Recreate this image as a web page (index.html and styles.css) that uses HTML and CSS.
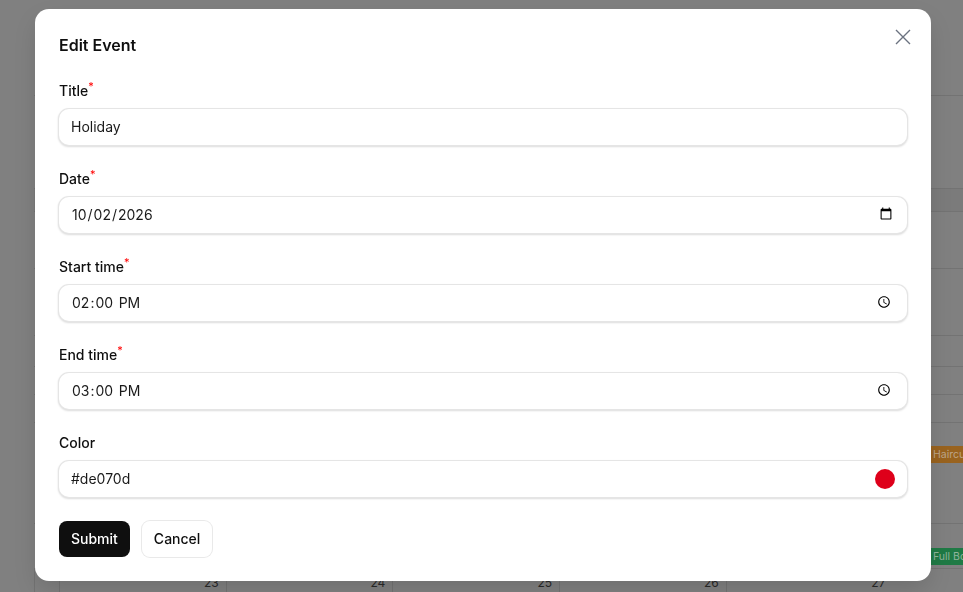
FILE: index.html
```html
<!DOCTYPE html>
<html lang="en">
<head>
    <meta charset="UTF-8">
    <meta name="viewport" content="width=device-width, initial-scale=1.0">
    <title>Edit Event</title>
    <link rel="stylesheet" href="styles.css">
</head>
<body>

<div class="calendar">
    <div class="row row-head"></div>
    <div class="row row-a"></div>
    <div class="row row-b"></div>
    <div class="row row-c"></div>
    <div class="row row-d"></div>
    <div class="row row-e"></div>
    <div class="row row-f"></div>
    <div class="row row-g"><span class="event event-orange">Haircut</span></div>
    <div class="row row-h"><span class="event event-green">Full Body</span></div>
    <div class="days">
        <span class="day">23</span>
        <span class="day">24</span>
        <span class="day">25</span>
        <span class="day">26</span>
        <span class="day">27</span>
    </div>
</div>

<div class="modal">
    <button type="button" class="close" aria-label="Close">
        <svg width="16" height="16" viewBox="0 0 16 16" fill="none" stroke="currentColor" stroke-width="1.4">
            <path d="M1 1L15 15M15 1L1 15"/>
        </svg>
    </button>
    <h2>Edit Event</h2>

    <form class="event-form">
        <div class="field">
            <label for="title">Title<sup>*</sup></label>
            <input type="text" id="title" value="Holiday">
        </div>
        <div class="field">
            <label for="date">Date<sup>*</sup></label>
            <input type="date" id="date" value="2026-10-02">
        </div>
        <div class="field">
            <label for="start">Start time<sup>*</sup></label>
            <input type="time" id="start" value="14:00">
        </div>
        <div class="field">
            <label for="end">End time<sup>*</sup></label>
            <input type="time" id="end" value="15:00">
        </div>
        <div class="field">
            <label for="color">Color</label>
            <div class="color-input">
                <input type="text" id="color" value="#de070d">
                <span class="swatch"></span>
            </div>
        </div>
        <div class="actions">
            <button type="button" class="btn btn-submit">Submit</button>
            <button type="button" class="btn btn-cancel">Cancel</button>
        </div>
    </form>
</div>

</body>
</html>
```

FILE: styles.css
```css
* {
    box-sizing: border-box;
}
html, body {
    height: 100%;
}
body {
    margin: 0;
    overflow: hidden;
    background: #808080;
    color: #0f0f0f;
    font-family: Inter, "Liberation Sans", sans-serif;
}

/* page behind the dialog, already dimmed */
.calendar {
    height: 592px;
    padding: 95px 0 0 34px;
}
.row {
    border-top: 1px solid #737373;
    position: relative;
}
.row-head { height: 93px; }
.row-a { height: 23px; background: #7b7b7b; }
.row-b { height: 57px; }
.row-c { height: 67px; }
.row-d { height: 31px; }
.row-e { height: 28px; }
.row-f { height: 28px; }
.row-g { height: 101px; }
.row-h { height: 45px; }
.event {
    position: absolute;
    left: 897px;
    width: 32px;
    height: 17px;
    padding-left: 2px;
    overflow: hidden;
    font-size: 10.5px;
    line-height: 17px;
    white-space: nowrap;
}
.event-orange {
    top: 23px;
    background: #99631f;
    color: #bda588;
}
.event-green {
    top: 24px;
    background: #1f7a45;
    color: #8fb39c;
}
.days {
    display: flex;
    height: 24px;
    padding-left: 24px;
    border-top: 1px solid #737373;
    border-left: 1px solid #737373;
}
.day {
    width: 166.7px;
    padding: 6px 7px 0 0;
    border-left: 1px solid #737373;
    color: #2a2a2a;
    font-size: 12px;
    text-align: right;
}

/* dialog */
.modal {
    position: fixed;
    top: 9px;
    left: 35px;
    width: 896px;
    padding: 24px;
    background: #fff;
    border-radius: 14px;
    box-shadow: 0 10px 25px -3px rgba(0, 0, 0, 0.15);
}
.modal h2 {
    margin: 0;
    font-size: 16px;
    font-weight: 600;
    line-height: 24px;
}
.close {
    position: absolute;
    top: 20px;
    right: 20px;
    display: flex;
    padding: 0;
    border: none;
    background: none;
    color: #6b7280;
}
.event-form {
    display: flex;
    flex-direction: column;
    gap: 24px;
    margin-top: 24px;
}
.field label {
    display: block;
    height: 20px;
    margin-bottom: 8px;
    font-size: 14px;
    font-weight: 500;
    line-height: 20px;
}
.field sup {
    color: #f00;
    font-size: 11px;
    font-weight: 400;
    line-height: 0;
}
.field input {
    display: block;
    width: 100%;
    height: 36px;
    padding: 0 12px 2px;
    border: none;
    border-radius: 10px;
    background: #fff;
    box-shadow: 0 0 0 1px #e5e5e5, 0 1px 2px 1px rgba(0, 0, 0, 0.14);
    color: #1a1a1a;
    font-family: inherit;
    font-size: 14px;
    outline: none;
}
.field input[type="time"]::-webkit-datetime-edit-ampm-field {
    margin-left: 1px;
}
.color-input {
    position: relative;
}
.swatch {
    position: absolute;
    top: 8px;
    right: 12px;
    width: 20px;
    height: 20px;
    border-radius: 50%;
    background: #de001a;
}
.actions {
    display: flex;
    align-items: center;
    gap: 12px;
}
.btn {
    height: 36px;
    padding: 0 12px 2px;
    border: none;
    border-radius: 8px;
    font-family: inherit;
    font-size: 14px;
    font-weight: 500;
}
.btn-submit {
    background: #0f0f0f;
    color: #fff;
}
.btn-cancel {
    background: #fff;
    box-shadow: 0 0 0 1px #e9e9e9;
    color: #0f0f0f;
}
```
